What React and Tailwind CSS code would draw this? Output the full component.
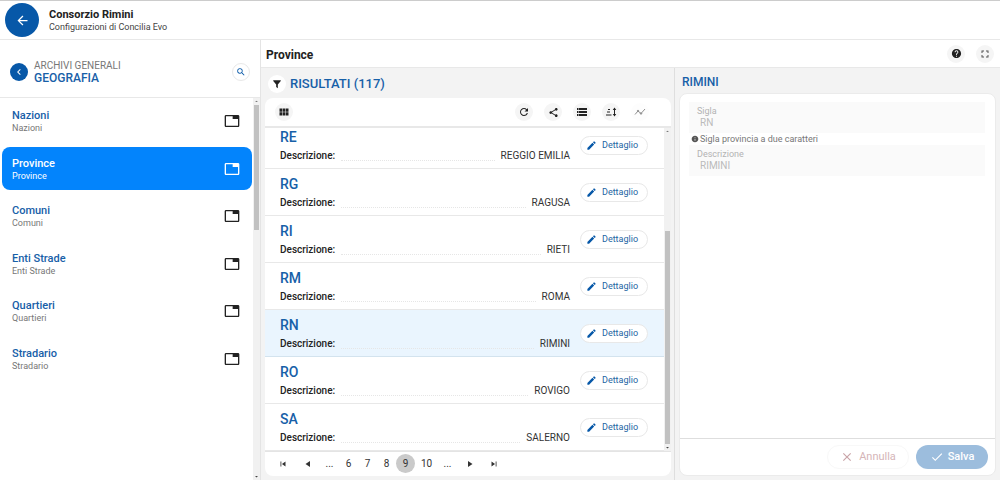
import React from "react";
import {
  MdArrowBack, MdChevronLeft, MdSearch, MdTab, MdViewModule, MdRefresh, MdShare,
  MdStorage, MdHelp, MdFullscreen, MdInfo, MdClose, MdCheck, MdEdit,
  MdSkipPrevious, MdSkipNext, MdArrowDropUp, MdArrowDropDown,
} from "react-icons/md";

const sections = ["Nazioni", "Province", "Comuni", "Enti Strade", "Quartieri", "Stradario"];

const provinces = [
  ["RE", "REGGIO EMILIA"],
  ["RG", "RAGUSA"],
  ["RI", "RIETI"],
  ["RM", "ROMA"],
  ["RN", "RIMINI"],
  ["RO", "ROVIGO"],
  ["SA", "SALERNO"],
];

function FilterIcon() {
  return (
    <svg viewBox="0 0 24 24" className="size-[10px]" fill="currentColor" aria-hidden="true">
      <path d="M3 3h18v2l-7 8v9l-4-3v-6L3 5z" />
    </svg>
  );
}

function SortIcon() {
  return (
    <svg viewBox="0 0 24 24" className="size-3" fill="none" stroke="currentColor" strokeWidth="2" aria-hidden="true">
      <path d="M6 7h4M4 12h6M2 18h11" />
      <path d="M19 5v14" />
      <path d="M15.500 8 19 3l3.500 5zM15.500 16 19 21l3.500-5z" fill="currentColor" stroke="none" />
    </svg>
  );
}

function TrendIcon() {
  return (
    <svg viewBox="0 0 24 24" className="size-3" fill="none" stroke="currentColor" strokeWidth="2" aria-hidden="true">
      <path d="M2 17 8 10l6 5 8-9" />
      <circle cx="8" cy="10" r="1.500" fill="currentColor" />
      <circle cx="14" cy="15" r="1.500" fill="currentColor" />
    </svg>
  );
}

function Triangle({ next }) {
  return (
    <svg viewBox="0 0 10 10" className="size-[10px]" fill="currentColor" aria-hidden="true">
      <path d={next ? "M3 2 7.500 5 3 8z" : "M7 2 2.500 5 7 8z"} />
    </svg>
  );
}

function RoundButton({ label, className = "bg-[#f5f5f5]", children, ...rest }) {
  return (
    <button
      type="button"
      aria-label={label}
      className={"flex size-[18px] shrink-0 items-center justify-center rounded-full text-[#222] " + className}
      {...rest}
    >
      {children}
    </button>
  );
}

function Scrollbar({ children }) {
  return (
    <div aria-hidden="true" className="flex w-[7px] shrink-0 flex-col items-center bg-[#f1f1f1] text-[#777]">
      <MdArrowDropUp className="size-[7px] shrink-0" />
      <div className="flex w-full grow flex-col px-px">{children}</div>
      <MdArrowDropDown className="size-[7px] shrink-0 text-[#444]" />
    </div>
  );
}

function Sidebar() {
  return (
    <aside className="flex w-[261px] shrink-0 flex-col border-r border-[#e4e4e4] bg-white">
      <div className="flex h-[58px] shrink-0 items-center border-b border-[#e8e8e8] pt-[6px] pr-[10px] pl-[10px]">
        <RoundButton label="Indietro" className="bg-[#0758a8]">
          <MdChevronLeft className="size-3 text-white" />
        </RoundButton>
        <div className="ml-[6px] grow">
          <p className="text-[10px] leading-3 text-[#777]">ARCHIVI GENERALI</p>
          <h2 className="text-[12px] leading-3 font-medium text-[#1760a8]">GEOGRAFIA</h2>
        </div>
        <RoundButton label="Cerca" className="border border-[#e8e8e8] bg-white">
          <MdSearch className="size-[10px] text-[#0758a8]" />
        </RoundButton>
      </div>
      <div className="flex grow">
        <nav className="grid h-[285px] grow grid-rows-6">
          {sections.map((name) => {
            const active = name === "Province";
            return (
              <a
                key={name}
                href="#"
                aria-current={active ? "page" : undefined}
                className={
                  "mt-px mr-px mb-[3px] ml-[2px] flex items-center rounded-lg pt-px pr-3 pl-[10px] " +
                  (active ? "bg-[#0384fc] text-white" : "text-[#222]")
                }
              >
                <span className="grow pt-[2px]">
                  <span className={"block text-[11px] leading-3 font-medium " + (active ? "" : "text-[#1760a8]")}>{name}</span>
                  <span className={"block text-[9px] leading-3 " + (active ? "" : "text-[#777]")}>{name}</span>
                </span>
                <MdTab className="size-4" />
              </a>
            );
          })}
        </nav>
        <Scrollbar>
          <div className="h-[125px] bg-[#c1c1c1]" />
        </Scrollbar>
      </div>
    </aside>
  );
}

function ResultRow({ code, name, selected }) {
  return (
    <li
      className={
        "flex h-[47px] shrink-0 items-center border-b pr-4 pl-[15px] " +
        (selected ? "border-[#d3e3ee] bg-[#eaf5fe]" : "border-[#e8e8e8]")
      }
    >
      <div className="grow">
        <h3 className="text-[14px] leading-4 font-medium text-[#1760a8]">{code}</h3>
        <div className="mt-[5px] flex items-end text-[10px] leading-3 text-[#333]">
          <span className="font-medium text-[#222]">Descrizione:</span>
          <span className="mx-[6px] mb-px grow border-b border-dotted border-[#e6e6e6]" />
          <span>{name}</span>
        </div>
      </div>
      <button
        type="button"
        className="ml-[10px] flex h-[19px] w-[68px] items-center gap-[5px] rounded-full border border-[#e8e8e8] bg-white pt-px pl-[5px] text-[9px] text-[#2465a3]"
      >
        <MdEdit className="size-[11px] text-[#0758a8]" />
        Dettaglio
      </button>
    </li>
  );
}

function Pager() {
  const cell = "flex h-[19px] w-[19px] items-center justify-center rounded-full";
  return (
    <nav aria-label="Pagine" className="flex h-[25px] shrink-0 items-center border-t border-[#e4e4e4] pb-px pl-2 text-[10px] text-[#333]">
      <button type="button" aria-label="Prima pagina" className={cell}><MdSkipPrevious className="size-[10px]" /></button>
      <button type="button" aria-label="Pagina precedente" className={cell + " ml-[6px]"}><Triangle /></button>
      <span className={cell + " ml-[3px]"}>...</span>
      <button type="button" className={cell}>6</button>
      <button type="button" className={cell}>7</button>
      <button type="button" className={cell}>8</button>
      <button type="button" aria-current="page" className={cell + " bg-[#cacaca]"}>9</button>
      <button type="button" className={cell + " ml-[2px]"}>10</button>
      <span className={cell + " ml-[2px]"}>...</span>
      <button type="button" aria-label="Pagina successiva" className={cell + " ml-[3px]"}><Triangle next /></button>
      <button type="button" aria-label="Ultima pagina" className={cell + " ml-[5px]"}><MdSkipNext className="size-[10px]" /></button>
    </nav>
  );
}

function Results() {
  return (
    <section className="flex grow flex-col border-r border-[#dedede] pr-[3px] pb-1 pl-1">
      <div className="flex h-[30px] shrink-0 items-center gap-1 pt-[2px] pl-[3px]">
        <RoundButton label="Filtro" className="bg-white"><FilterIcon /></RoundButton>
        <h2 className="text-[13px] font-medium text-[#1760a8]">RISULTATI (117)</h2>
      </div>
      <div className="flex min-h-0 grow flex-col overflow-hidden rounded-lg bg-white">
        <div className="flex h-[30px] shrink-0 items-center justify-between border-b-2 border-[#e8e8e8] pr-[22px] pl-[10px]">
          <RoundButton label="Griglia"><MdViewModule className="size-3" /></RoundButton>
          <div className="flex gap-[11px]">
            <RoundButton label="Aggiorna"><MdRefresh className="size-3" /></RoundButton>
            <RoundButton label="Condividi"><MdShare className="size-[11px]" /></RoundButton>
            <RoundButton label="Elenco"><MdStorage className="size-3" /></RoundButton>
            <RoundButton label="Ordina"><SortIcon /></RoundButton>
            <RoundButton label="Grafico" className="bg-[#fcfcfc] opacity-50" disabled><TrendIcon /></RoundButton>
          </div>
        </div>
        <div className="flex min-h-0 grow">
          <ul className="flex grow flex-col justify-end overflow-hidden">
            {provinces.map(([code, name]) => (
              <ResultRow key={code} code={code} name={name} selected={code === "RN"} />
            ))}
          </ul>
          <Scrollbar>
            <div className="mt-auto h-[69%] bg-[#c1c1c1]" />
          </Scrollbar>
        </div>
        <Pager />
      </div>
    </section>
  );
}

function Field({ id, label, value }) {
  return (
    <div className="flex h-[31px] flex-col bg-[#fafafa] px-2 pt-[3px]">
      <label htmlFor={id} className="text-[9px] leading-3 text-[#b3b3b3]">{label}</label>
      <input id={id} defaultValue={value} disabled className="h-3 w-full bg-transparent px-[3px] text-[10px] leading-3 text-[#bbb]" />
    </div>
  );
}

function Detail() {
  return (
    <section className="flex w-[325px] shrink-0 flex-col pr-1 pb-1 pl-1">
      <h2 className="h-[25px] shrink-0 pt-[4px] pl-[3px] text-[12px] leading-5 font-medium text-[#1760a8]">RIMINI</h2>
      <form className="flex grow flex-col rounded-lg border border-[#ebebeb] bg-white">
        <div className="grow pt-2 pr-[10px] pl-[9px]">
          <Field id="sigla" label="Sigla" value="RN" />
          <p className="flex h-3 items-center gap-px pl-[2px] text-[9px] leading-3 text-[#777]">
            <MdInfo className="size-2 text-[#555]" />
            Sigla provincia a due caratteri
          </p>
          <Field id="descrizione" label="Descrizione" value="RIMINI" />
        </div>
        <div className="flex h-[37px] shrink-0 items-center justify-end gap-[7px] border-t border-[#dedede] pr-[7px]">
          <button type="button" disabled className="flex h-6 w-[82px] items-center justify-center gap-[5px] rounded-full border border-[#f8f8f8] text-[11px] text-[#d5b5b8]">
            <MdClose className="size-[14px] text-[#c9a4a8]" />
            Annulla
          </button>
          <button type="submit" disabled className="flex h-6 w-[72px] items-center justify-center gap-1 rounded-full bg-[#9cbddd] text-[11px] font-medium text-white">
            <MdCheck className="size-[14px]" />
            Salva
          </button>
        </div>
      </form>
    </section>
  );
}

export default function App() {
  return (
    <div className="flex h-screen flex-col bg-white font-['Roboto',sans-serif] text-[#222]">
      <header className="flex h-10 shrink-0 items-center border-t border-b border-t-[#ccc] border-b-[#e8e8e8] pl-[5px]">
        <button type="button" aria-label="Torna indietro" className="flex size-[34px] items-center justify-center rounded-full bg-[#0758a8] text-white">
          <MdArrowBack className="size-[15px]" />
        </button>
        <div className="ml-[10px] pt-[2px]">
          <h1 className="text-[11px] leading-3 font-bold">Consorzio Rimini</h1>
          <p className="text-[9px] leading-3 text-[#444]">Configurazioni di Concilia Evo</p>
        </div>
      </header>
      <div className="flex min-h-0 grow">
        <Sidebar />
        <main className="flex min-w-0 grow flex-col bg-[#f3f3f3]">
          <div className="flex h-7 shrink-0 items-center border-b border-[#e8e8e8] bg-white pr-[6px] pl-[5px]">
            <h2 className="grow pt-[2px] text-[12px] font-bold">Province</h2>
            <div className="flex gap-[11px]">
              <RoundButton label="Aiuto"><MdHelp className="size-[11px]" /></RoundButton>
              <RoundButton label="Schermo intero"><MdFullscreen className="size-3 text-[#555]" /></RoundButton>
            </div>
          </div>
          <div className="flex min-h-0 grow">
            <Results />
            <Detail />
          </div>
        </main>
      </div>
    </div>
  );
}
